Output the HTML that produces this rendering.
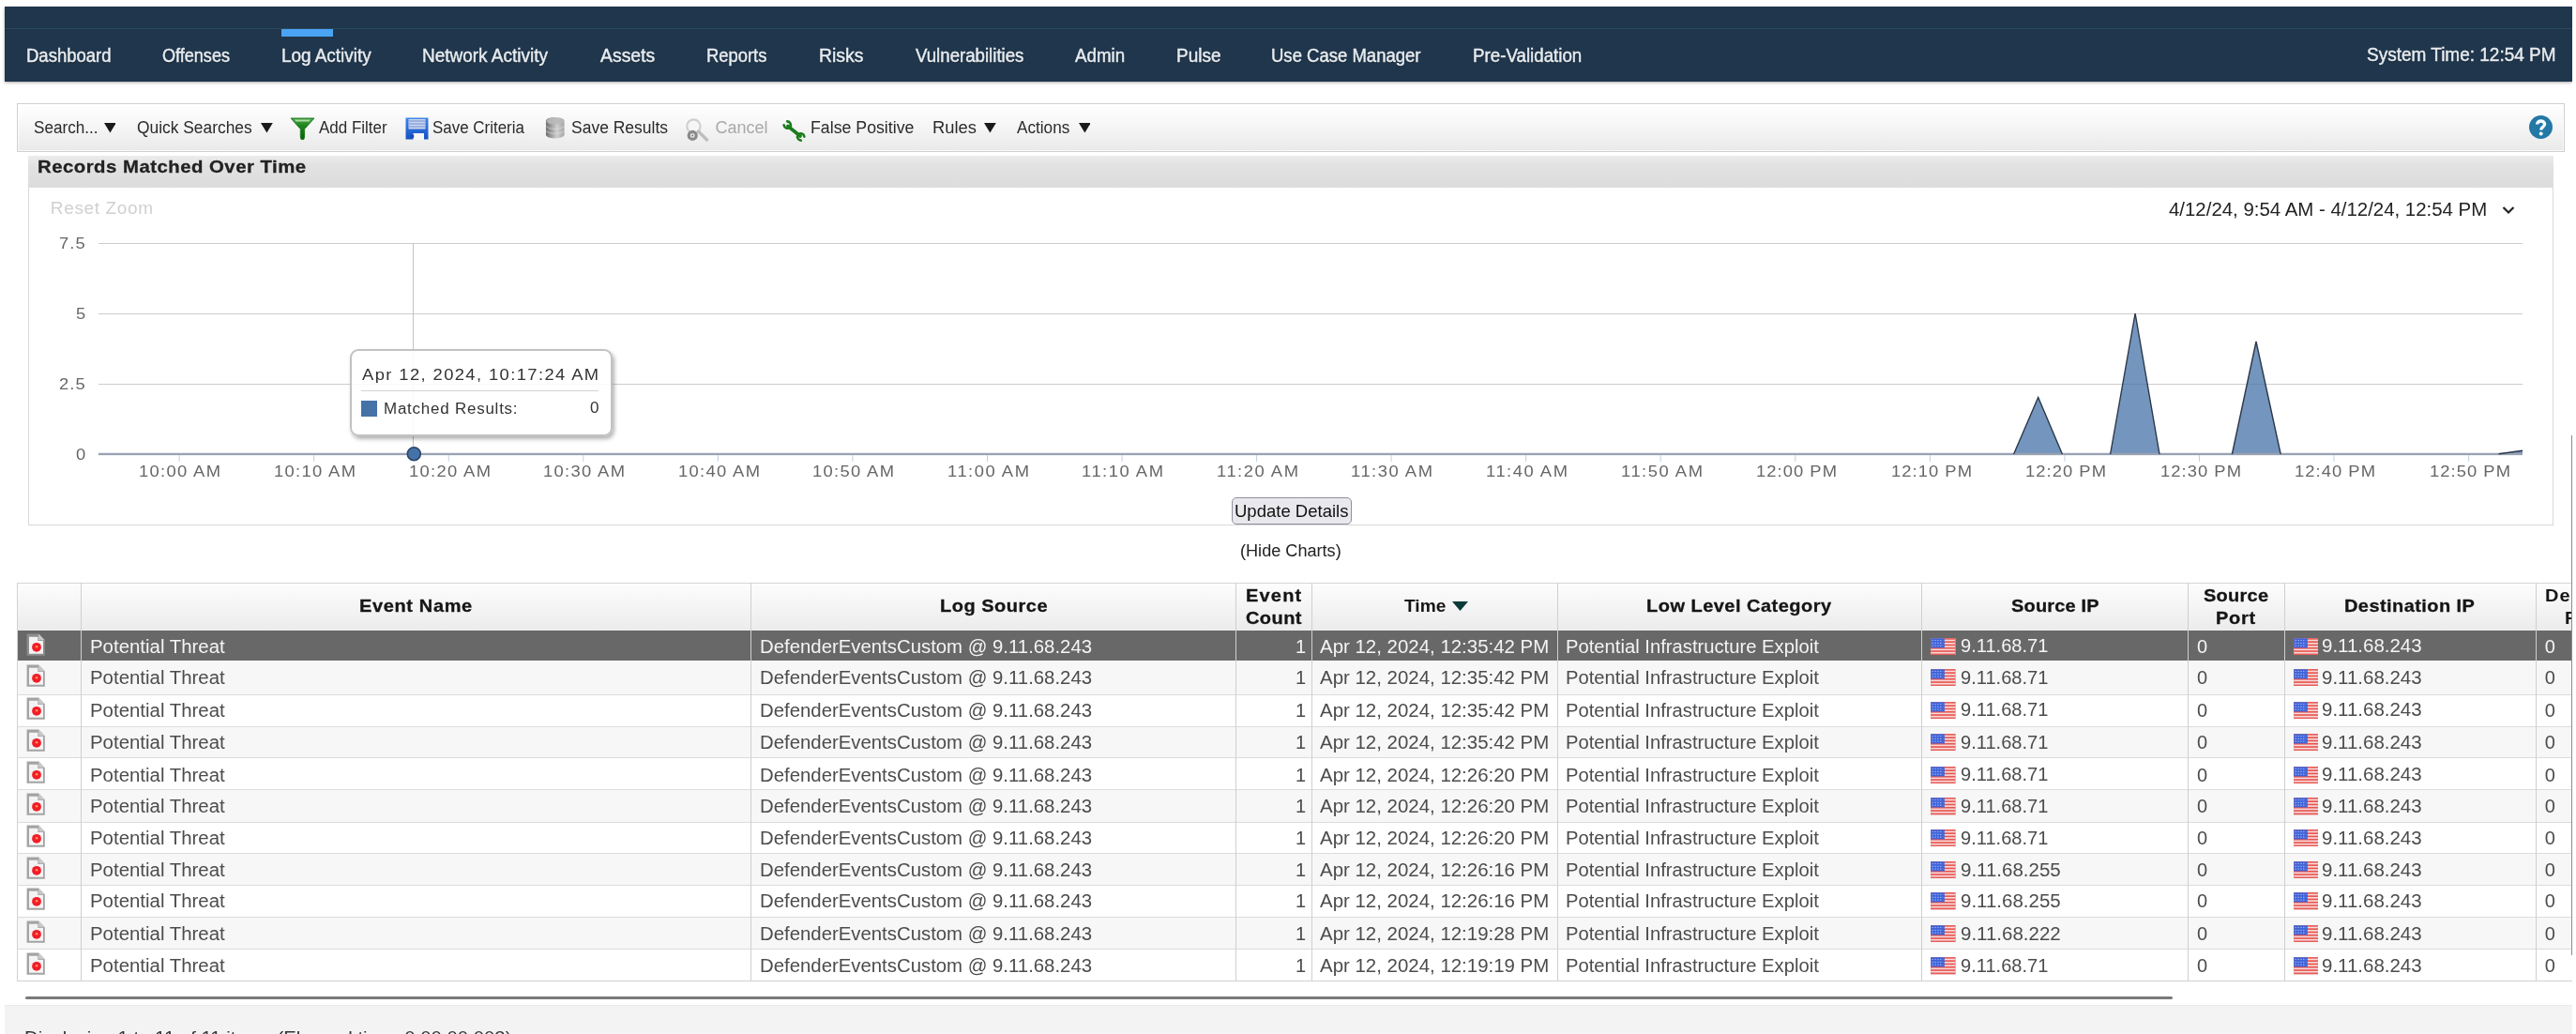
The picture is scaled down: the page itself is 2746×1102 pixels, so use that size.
<!DOCTYPE html><html><head><meta charset="utf-8"><title>Log Activity</title><style>
html,body{margin:0;padding:0;background:#fff;}
body{width:2746px;height:1102px;overflow:hidden;position:relative;font-family:"Liberation Sans",sans-serif;}
.a{position:absolute;}
.t{position:absolute;white-space:pre;display:inline-block;}
#clip{position:absolute;left:0;top:0;width:2742px;height:1102px;overflow:hidden;filter:blur(.45px);}
</style></head><body><div id="clip">
<div class="a" style="left:5px;top:7.3px;width:2737px;height:80px;background:#1f364c;box-shadow:0 1px 3px rgba(0,0,0,.35)"></div>
<div class="a" style="left:5px;top:30px;width:2737px;height:1px;background:#2b4a5e"></div>
<div class="a" style="left:300px;top:31px;width:55px;height:8px;background:#4ba3f4"></div>
<span class="t" style="left:27.58px;top:47.37px;font-size:20px;line-height:24.00px;color:#e9edf0;transform:scaleX(0.9246);transform-origin:0 50%;text-shadow:0 1px 1px rgba(0,0,0,.5);-webkit-text-stroke:.45px #e4e9ee">Dashboard</span>
<span class="t" style="left:173.20px;top:47.37px;font-size:20px;line-height:24.00px;color:#e9edf0;transform:scaleX(0.9036);transform-origin:0 50%;text-shadow:0 1px 1px rgba(0,0,0,.5);-webkit-text-stroke:.45px #e4e9ee">Offenses</span>
<span class="t" style="left:299.75px;top:47.37px;font-size:20px;line-height:24.00px;color:#e9edf0;transform:scaleX(0.9450);transform-origin:0 50%;text-shadow:0 1px 1px rgba(0,0,0,.5);-webkit-text-stroke:.45px #e4e9ee">Log Activity</span>
<span class="t" style="left:449.75px;top:47.37px;font-size:20px;line-height:24.00px;color:#e9edf0;transform:scaleX(0.9487);transform-origin:0 50%;text-shadow:0 1px 1px rgba(0,0,0,.5);-webkit-text-stroke:.45px #e4e9ee">Network Activity</span>
<span class="t" style="left:640.00px;top:47.37px;font-size:20px;line-height:24.00px;color:#e9edf0;transform:scaleX(0.9697);transform-origin:0 50%;text-shadow:0 1px 1px rgba(0,0,0,.5);-webkit-text-stroke:.45px #e4e9ee">Assets</span>
<span class="t" style="left:752.68px;top:47.37px;font-size:20px;line-height:24.00px;color:#e9edf0;transform:scaleX(0.9199);transform-origin:0 50%;text-shadow:0 1px 1px rgba(0,0,0,.5);-webkit-text-stroke:.45px #e4e9ee">Reports</span>
<span class="t" style="left:872.93px;top:47.37px;font-size:20px;line-height:24.00px;color:#e9edf0;transform:scaleX(0.9710);transform-origin:0 50%;text-shadow:0 1px 1px rgba(0,0,0,.5);-webkit-text-stroke:.45px #e4e9ee">Risks</span>
<span class="t" style="left:975.70px;top:47.37px;font-size:20px;line-height:24.00px;color:#e9edf0;transform:scaleX(0.9324);transform-origin:0 50%;text-shadow:0 1px 1px rgba(0,0,0,.5);-webkit-text-stroke:.45px #e4e9ee">Vulnerabilities</span>
<span class="t" style="left:1146.10px;top:47.37px;font-size:20px;line-height:24.00px;color:#e9edf0;transform:scaleX(0.9376);transform-origin:0 50%;text-shadow:0 1px 1px rgba(0,0,0,.5);-webkit-text-stroke:.45px #e4e9ee">Admin</span>
<span class="t" style="left:1254.05px;top:47.37px;font-size:20px;line-height:24.00px;color:#e9edf0;transform:scaleX(0.9488);transform-origin:0 50%;text-shadow:0 1px 1px rgba(0,0,0,.5);-webkit-text-stroke:.45px #e4e9ee">Pulse</span>
<span class="t" style="left:1355.17px;top:47.37px;font-size:20px;line-height:24.00px;color:#e9edf0;transform:scaleX(0.9258);transform-origin:0 50%;text-shadow:0 1px 1px rgba(0,0,0,.5);-webkit-text-stroke:.45px #e4e9ee">Use Case Manager</span>
<span class="t" style="left:1570.16px;top:47.37px;font-size:20px;line-height:24.00px;color:#e9edf0;transform:scaleX(0.9368);transform-origin:0 50%;text-shadow:0 1px 1px rgba(0,0,0,.5);-webkit-text-stroke:.45px #e4e9ee">Pre-Validation</span>
<span class="t" style="left:2522.70px;top:46.47px;font-size:20px;line-height:24.00px;color:#e9edf0;transform:scaleX(0.9495);transform-origin:0 50%;text-shadow:0 1px 1px rgba(0,0,0,.5);-webkit-text-stroke:.45px #e4e9ee">System Time: 12:54 PM</span>
<div class="a" style="left:18px;top:110px;width:2714px;height:50px;box-shadow:inset 0 0 0 1px rgba(255,255,255,.7);border:1px solid #d0d0d0;background:linear-gradient(#ffffff,#f5f5f5 50%,#e9e9e9)"></div>
<span class="t" style="left:35.60px;top:125.96px;font-size:18px;line-height:21.60px;color:#2b2b2b;transform:scaleX(0.9517);transform-origin:0 50%">Search...</span>
<svg class="a" style="left:110.6px;top:131.4px" width="12.8" height="10.5" viewBox="0 0 12.8 10.5"><path d="M0 0H12.8L6.4 10.5Z" fill="#1a1a1a"/></svg>
<span class="t" style="left:146.30px;top:125.96px;font-size:18px;line-height:21.60px;color:#2b2b2b;transform:scaleX(0.9657);transform-origin:0 50%">Quick Searches</span>
<svg class="a" style="left:278.4px;top:131.4px" width="12.8" height="10.5" viewBox="0 0 12.8 10.5"><path d="M0 0H12.8L6.4 10.5Z" fill="#1a1a1a"/></svg>
<span class="t" style="left:340.30px;top:125.96px;font-size:18px;line-height:21.60px;color:#2b2b2b;transform:scaleX(0.9437);transform-origin:0 50%">Add Filter</span>
<span class="t" style="left:461.40px;top:125.96px;font-size:18px;line-height:21.60px;color:#2b2b2b;transform:scaleX(0.9407);transform-origin:0 50%">Save Criteria</span>
<span class="t" style="left:609.00px;top:125.96px;font-size:18px;line-height:21.60px;color:#2b2b2b;transform:scaleX(0.9713);transform-origin:0 50%">Save Results</span>
<span class="t" style="left:762.50px;top:125.96px;font-size:18px;line-height:21.60px;color:#a9a9a9">Cancel</span>
<span class="t" style="left:864.01px;top:125.96px;font-size:18px;line-height:21.60px;color:#2b2b2b;transform:scaleX(0.9853);transform-origin:0 50%">False Positive</span>
<span class="t" style="left:994.48px;top:125.96px;font-size:18px;line-height:21.60px;color:#2b2b2b;transform:scaleX(1.0218);transform-origin:0 50%">Rules</span>
<svg class="a" style="left:1049px;top:131.4px" width="12.8" height="10.5" viewBox="0 0 12.8 10.5"><path d="M0 0H12.8L6.4 10.5Z" fill="#1a1a1a"/></svg>
<span class="t" style="left:1083.70px;top:125.96px;font-size:18px;line-height:21.60px;color:#2b2b2b;transform:scaleX(0.9538);transform-origin:0 50%">Actions</span>
<svg class="a" style="left:1149.5px;top:131.4px" width="12.8" height="10.5" viewBox="0 0 12.8 10.5"><path d="M0 0H12.8L6.4 10.5Z" fill="#1a1a1a"/></svg>
<svg class="a" style="left:309px;top:124px" width="27" height="27" viewBox="0 0 27 27">
<defs><linearGradient id="gf" x1="0" y1="0" x2="0" y2="1"><stop offset="0" stop-color="#4aa54a"/><stop offset=".35" stop-color="#1f861f"/><stop offset="1" stop-color="#0a5e0a"/></linearGradient></defs>
<path d="M1 2H26L15.6 13.6V22L14.8 24.6H12L11.3 22V13.6Z" fill="url(#gf)" stroke="#1a771a" stroke-width=".9"/>
<path d="M5 3.6H22L20.6 5.6H6.4Z" fill="#a9dca3"/></svg>
<svg class="a" style="left:432px;top:125px" width="25" height="24" viewBox="0 0 25 24">
<defs><linearGradient id="gs" x1="0" y1="0" x2="0" y2="1"><stop offset="0" stop-color="#3f86e8"/><stop offset="1" stop-color="#1450c4"/></linearGradient></defs>
<path d="M.5 .5H24.5V23.5H.5Z" fill="url(#gs)"/>
<rect x="3.5" y="2" width="18" height="10.5" fill="#cdd6ee"/>
<path d="M3.5 4H21.5M3.5 7H21.5M3.5 10H21.5" stroke="#8aa2dc" stroke-width="1.4"/>
<rect x="8.5" y="17" width="11.5" height="7" fill="#f6f6f6"/><rect x="5.8" y="18.6" width="3.4" height="3.2" fill="#1a49ae"/></svg>
<svg class="a" style="left:581px;top:124px" width="21.5" height="24.5" viewBox="0 0 22 25">
<defs><linearGradient id="gd" x1="0" y1="0" x2="1" y2="0"><stop offset="0" stop-color="#6f6f6f"/><stop offset=".6" stop-color="#cfcfcf"/><stop offset="1" stop-color="#a4a4a4"/></linearGradient></defs>
<path d="M1 5C1 -0.3 21 -0.3 21 5V20C21 25.3 1 25.3 1 20Z" fill="url(#gd)"/>
<ellipse cx="11" cy="5" rx="9.6" ry="3.6" fill="#b9b9b9" opacity=".9"/>
<path d="M1.5 10.5C1.5 14.6 20.5 14.6 20.5 10.5M1.5 15.6C1.5 19.7 20.5 19.7 20.5 15.6" fill="none" stroke="#e6e6e6" stroke-width="1" opacity=".6"/></svg>
<svg class="a" style="left:727.5px;top:124.5px" width="28" height="27" viewBox="0 0 28 27">
<circle cx="11.4" cy="9.6" r="7.2" fill="#f6f6f6" stroke="#d0d0d0" stroke-width="2.2"/>
<path d="M16.5 15L25.5 24" stroke="#bdbdbd" stroke-width="3.4" stroke-linecap="round"/>
<circle cx="10.2" cy="19.4" r="4" fill="none" stroke="#8a8a8a" stroke-width="3.2"/><circle cx="10.2" cy="19.4" r="1" fill="#777"/></svg>
<svg class="a" style="left:833.5px;top:127.5px" width="25" height="23" viewBox="0 0 25 23">
<g fill="none" stroke="#1c7c1c" stroke-linecap="round">
<path d="M6 6.5L19 17" stroke-width="3.6"/>
<path d="M1.6 5.2C2.2 8.6 5.6 9.6 8 8M5.2 1.4C8.4 1.6 9.8 4.8 8.4 7.4" stroke-width="2.6"/>
<path d="M23.4 17.6C22.8 14.4 19.6 13.4 17.2 15M19.8 21.6C16.6 21.4 15.2 18.2 16.6 15.6" stroke-width="2.6"/>
</g></svg>
<svg class="a" style="left:2694.5px;top:121.7px" width="27" height="27" viewBox="0 0 27 27">
<circle cx="13.5" cy="13.5" r="12.5" fill="#2378a6"/>
<path d="M9.6 10.4C9.6 5.8 17.6 6 17.6 10.2C17.6 13 13.7 13.4 13.7 16.4" fill="none" stroke="#f4fbff" stroke-width="3.4"/>
<circle cx="13.7" cy="20.4" r="2" fill="#f4fbff"/></svg>
<div class="a" style="left:30px;top:166px;width:2690px;height:392px;border:1px solid #d9d9d9;background:#fff"></div>
<div class="a" style="left:30px;top:166px;width:2692px;height:34px;background:linear-gradient(#ececec,#e2e2e2 30%,#dcdcdc)"></div>
<span class="t" style="left:39.53px;top:167.22px;font-size:19px;line-height:22.80px;color:#222;font-weight:bold;letter-spacing:0.463px;transform:scaleX(1.0700);transform-origin:0 50%;-webkit-text-stroke:.3px #222">Records Matched Over Time</span>
<span class="t" style="left:53.80px;top:211.22px;font-size:19px;line-height:22.80px;color:#d0d0d0;letter-spacing:0.650px">Reset Zoom</span>
<span class="t" style="left:2312.00px;top:211.94px;font-size:19.5px;line-height:23.40px;color:#222;transform:scaleX(1.0464);transform-origin:0 50%">4/12/24, 9:54 AM - 4/12/24, 12:54 PM</span>
<svg class="a" style="left:2667px;top:219px" width="14" height="10" viewBox="0 0 14 10"><path d="M1.5 2L7 7.5L12.5 2" fill="none" stroke="#222" stroke-width="2.2"/></svg>
<svg class="a" style="left:0;top:0" width="2742" height="620" viewBox="0 0 2742 620">
<path d="M105.0 259.5H2689.0" stroke="#cdcdcd" stroke-width="1"/>
<path d="M105.0 334.5H2689.0" stroke="#cdcdcd" stroke-width="1"/>
<path d="M105.0 409.5H2689.0" stroke="#cdcdcd" stroke-width="1"/>
<path d="M440.5 259V484" stroke="#c2c2c2" stroke-width="1"/>
<path d="M105.0 484.5H2689.0" stroke="#c0d0e0" stroke-width="1.5"/>
<path d="M191.1 485V492M334.7 485V492M478.2 485V492M621.8 485V492M765.4 485V492M908.9 485V492M1052.5 485V492M1196.0 485V492M1339.6 485V492M1483.1 485V492M1626.7 485V492M1770.2 485V492M1913.8 485V492M2057.4 485V492M2200.9 485V492M2344.5 485V492M2488.0 485V492M2631.6 485V492" stroke="#c0d0e0" stroke-width="1"/>
<path d="M105.0 484.0 L2146.6 484.0 L2172.7 423.5 L2198.4 484.0 L2249.6 484.0 L2276.1 334.0 L2302.0 484.0 L2379.4 484.0 L2405.0 364.0 L2431.2 484.0 L2663.6 484.0 L2689.0 480.3 L2689.0 484.5 L105.0 484.5Z" fill="#4572a7" fill-opacity=".75"/>
<path d="M105.0 483.9H2689.0" stroke="#9aa2b2" stroke-width="2.4"/>
<path d="M2146.6 484.0L2172.7 423.5L2198.4 484.0" fill="none" stroke="#2b3849" stroke-width="1.4" stroke-linejoin="miter"/>
<path d="M2249.6 484.0L2276.1 334.0L2302.0 484.0" fill="none" stroke="#2b3849" stroke-width="1.4" stroke-linejoin="miter"/>
<path d="M2379.4 484.0L2405.0 364.0L2431.2 484.0" fill="none" stroke="#2b3849" stroke-width="1.4" stroke-linejoin="miter"/>
<path d="M2663.6 483.8L2689.0 480.3" fill="none" stroke="#2b3849" stroke-width="1.6"/>
<circle cx="441.3" cy="483.7" r="7" fill="#4572a7" stroke="#2a4468" stroke-width="1.6"/>
</svg><span class="t" style="left:62.90px;top:250.41px;font-size:17px;line-height:20.40px;color:#666;letter-spacing:1.050px;transform:scaleX(1.0800);transform-origin:0 50%">7.5</span><span class="t" style="left:81.40px;top:325.41px;font-size:17px;line-height:20.40px;color:#666;letter-spacing:-0.852px;transform:scaleX(1.0800);transform-origin:0 50%">5</span><span class="t" style="left:62.90px;top:400.41px;font-size:17px;line-height:20.40px;color:#666;letter-spacing:1.050px;transform:scaleX(1.0800);transform-origin:0 50%">2.5</span><span class="t" style="left:80.60px;top:475.41px;font-size:17px;line-height:20.40px;color:#666;letter-spacing:-0.111px;transform:scaleX(1.0800);transform-origin:0 50%">0</span><span class="t" style="left:148.45px;top:492.91px;font-size:17px;line-height:20.40px;color:#666;letter-spacing:1.237px;transform:scaleX(1.0800);transform-origin:0 50%">10:00 AM</span><span class="t" style="left:292.01px;top:492.91px;font-size:17px;line-height:20.40px;color:#666;letter-spacing:1.237px;transform:scaleX(1.0800);transform-origin:0 50%">10:10 AM</span><span class="t" style="left:435.56px;top:492.91px;font-size:17px;line-height:20.40px;color:#666;letter-spacing:1.237px;transform:scaleX(1.0800);transform-origin:0 50%">10:20 AM</span><span class="t" style="left:579.12px;top:492.91px;font-size:17px;line-height:20.40px;color:#666;letter-spacing:1.237px;transform:scaleX(1.0800);transform-origin:0 50%">10:30 AM</span><span class="t" style="left:722.68px;top:492.91px;font-size:17px;line-height:20.40px;color:#666;letter-spacing:1.237px;transform:scaleX(1.0800);transform-origin:0 50%">10:40 AM</span><span class="t" style="left:866.23px;top:492.91px;font-size:17px;line-height:20.40px;color:#666;letter-spacing:1.237px;transform:scaleX(1.0800);transform-origin:0 50%">10:50 AM</span><span class="t" style="left:1009.79px;top:492.91px;font-size:17px;line-height:20.40px;color:#666;letter-spacing:1.417px;transform:scaleX(1.0800);transform-origin:0 50%">11:00 AM</span><span class="t" style="left:1153.34px;top:492.91px;font-size:17px;line-height:20.40px;color:#666;letter-spacing:1.417px;transform:scaleX(1.0800);transform-origin:0 50%">11:10 AM</span><span class="t" style="left:1296.90px;top:492.91px;font-size:17px;line-height:20.40px;color:#666;letter-spacing:1.417px;transform:scaleX(1.0800);transform-origin:0 50%">11:20 AM</span><span class="t" style="left:1440.45px;top:492.91px;font-size:17px;line-height:20.40px;color:#666;letter-spacing:1.417px;transform:scaleX(1.0800);transform-origin:0 50%">11:30 AM</span><span class="t" style="left:1584.01px;top:492.91px;font-size:17px;line-height:20.40px;color:#666;letter-spacing:1.417px;transform:scaleX(1.0800);transform-origin:0 50%">11:40 AM</span><span class="t" style="left:1727.56px;top:492.91px;font-size:17px;line-height:20.40px;color:#666;letter-spacing:1.417px;transform:scaleX(1.0800);transform-origin:0 50%">11:50 AM</span><span class="t" style="left:1872.12px;top:492.91px;font-size:17px;line-height:20.40px;color:#666;letter-spacing:0.972px;transform:scaleX(1.0800);transform-origin:0 50%">12:00 PM</span><span class="t" style="left:2015.68px;top:492.91px;font-size:17px;line-height:20.40px;color:#666;letter-spacing:0.972px;transform:scaleX(1.0800);transform-origin:0 50%">12:10 PM</span><span class="t" style="left:2159.23px;top:492.91px;font-size:17px;line-height:20.40px;color:#666;letter-spacing:0.972px;transform:scaleX(1.0800);transform-origin:0 50%">12:20 PM</span><span class="t" style="left:2302.79px;top:492.91px;font-size:17px;line-height:20.40px;color:#666;letter-spacing:0.972px;transform:scaleX(1.0800);transform-origin:0 50%">12:30 PM</span><span class="t" style="left:2446.34px;top:492.91px;font-size:17px;line-height:20.40px;color:#666;letter-spacing:0.972px;transform:scaleX(1.0800);transform-origin:0 50%">12:40 PM</span><span class="t" style="left:2589.90px;top:492.91px;font-size:17px;line-height:20.40px;color:#666;letter-spacing:0.972px;transform:scaleX(1.0800);transform-origin:0 50%">12:50 PM</span><div class="a" style="left:373px;top:372px;width:276px;height:88.5px;border:2px solid #c2c2c2;border-radius:9px;background:rgba(255,255,255,.88);box-shadow:2px 3px 4px rgba(0,0,0,.3)"></div><span class="t" style="left:386.10px;top:390.01px;font-size:17px;line-height:20.40px;color:#333;letter-spacing:1.300px;transform:scaleX(1.0800);transform-origin:0 50%">Apr 12, 2024, 10:17:24 AM</span><div class="a" style="left:385px;top:416px;width:253px;height:1px;background:#d4d4d4"></div><div class="a" style="left:385px;top:426.5px;width:17px;height:17px;background:#4572a7"></div><span class="t" style="left:409.14px;top:426.26px;font-size:16px;line-height:19.20px;color:#333;letter-spacing:0.727px;transform:scaleX(1.0600);transform-origin:0 50%">Matched Results:</span><span class="t" style="left:628.50px;top:424.78px;font-size:16.5px;line-height:19.80px;color:#333;transform:scaleX(1.0333);transform-origin:0 50%">0</span>
<div class="a" style="left:1313px;top:529.5px;width:126px;height:27px;border:1px solid #8f8f9d;border-radius:5px;background:#e9e9ed"></div>
<span class="t" style="left:1315.53px;top:533.52px;font-size:19px;line-height:22.80px;color:#111;transform:scaleX(0.9746);transform-origin:0 50%">Update Details</span>
<span class="t" style="left:1322.34px;top:576.56px;font-size:18px;line-height:21.60px;color:#222;transform:scaleX(1.0064);transform-origin:0 50%">(Hide Charts)</span>
<div class="a" style="left:18.5px;top:620.5px;width:2740px;height:51.0px;background:linear-gradient(#fdfdfd,#f4f4f4 50%,#ebebeb);border-top:1px solid #d6d6d6"></div>
<div class="a" style="left:18.5px;top:671.60px;width:2740px;height:32.90px;background:#686868;box-shadow:inset 0 -1px 0 #686868"></div>
<svg class="a" style="left:28.2px;top:674.5px" width="20.4" height="24.4" viewBox="0 0 20.4 24.4">
<path d="M.6 .6H13.2L19.8 7.2V23.8H.6Z" fill="#8d8d8d"/>
<path d="M13.2 .6L19.8 7.2H13.2Z" fill="#c9c9c9"/>
<path d="M3 3.8H12.4V8H18V21.8H3Z" fill="#f3f3f3"/>
<circle cx="11" cy="14.8" r="4.9" fill="#f21d28"/><circle cx="11.1" cy="14.2" r="1.3" fill="#ff9060"/></svg>
<span class="t" style="left:95.58px;top:676.77px;font-size:20px;line-height:24.00px;color:#f4f4f4;transform:scaleX(1.0204);transform-origin:0 50%">Potential Threat</span>
<span class="t" style="left:810.08px;top:676.77px;font-size:20px;line-height:24.00px;color:#f4f4f4;transform:scaleX(1.0176);transform-origin:0 50%">DefenderEventsCustom @ 9.11.68.243</span>
<span class="t" style="left:1381.00px;top:676.77px;font-size:20px;line-height:24.00px;color:#f4f4f4">1</span>
<span class="t" style="left:1406.90px;top:676.77px;font-size:20px;line-height:24.00px;color:#f4f4f4;transform:scaleX(1.0218);transform-origin:0 50%">Apr 12, 2024, 12:35:42 PM</span>
<span class="t" style="left:1668.99px;top:676.77px;font-size:20px;line-height:24.00px;color:#f4f4f4;transform:scaleX(1.0111);transform-origin:0 50%">Potential Infrastructure Exploit</span>
<svg class="a" style="left:2058.4px;top:679.7px" width="26.4" height="18.2" viewBox="0 0 16 11"><rect width="16" height="11" fill="#f6dcdc"/><rect y="0" width="16" height="1" fill="#e8544f"/><rect y="2" width="16" height="1" fill="#e8544f"/><rect y="4" width="16" height="1" fill="#e8544f"/><rect y="6" width="16" height="1" fill="#e8544f"/><rect y="8" width="16" height="1" fill="#e8544f"/><rect y="10" width="16" height="1" fill="#e8544f"/><rect width="9" height="6.3" fill="#3f63d8"/><path d="M1 1.5H8M1 3.2H8M1 4.9H8" stroke="#9db4f5" stroke-width=".7" stroke-dasharray=".8 .9"/><rect width="16" height="11" fill="none" stroke="#d88" stroke-width=".5" opacity=".6"/></svg>
<span class="t" style="left:2090.00px;top:676.27px;font-size:20px;line-height:24.00px;color:#f4f4f4;transform:scaleX(1.0030);transform-origin:0 50%">9.11.68.71</span>
<span class="t" style="left:2342.00px;top:676.77px;font-size:20px;line-height:24.00px;color:#f4f4f4">0</span>
<svg class="a" style="left:2445px;top:679.7px" width="26.4" height="18.2" viewBox="0 0 16 11"><rect width="16" height="11" fill="#f6dcdc"/><rect y="0" width="16" height="1" fill="#e8544f"/><rect y="2" width="16" height="1" fill="#e8544f"/><rect y="4" width="16" height="1" fill="#e8544f"/><rect y="6" width="16" height="1" fill="#e8544f"/><rect y="8" width="16" height="1" fill="#e8544f"/><rect y="10" width="16" height="1" fill="#e8544f"/><rect width="9" height="6.3" fill="#3f63d8"/><path d="M1 1.5H8M1 3.2H8M1 4.9H8" stroke="#9db4f5" stroke-width=".7" stroke-dasharray=".8 .9"/><rect width="16" height="11" fill="none" stroke="#d88" stroke-width=".5" opacity=".6"/></svg>
<span class="t" style="left:2475.10px;top:676.27px;font-size:20px;line-height:24.00px;color:#f4f4f4;transform:scaleX(1.0236);transform-origin:0 50%">9.11.68.243</span>
<span class="t" style="left:2712.80px;top:676.77px;font-size:20px;line-height:24.00px;color:#f4f4f4">0</span>
<div class="a" style="left:18.5px;top:704.50px;width:2740px;height:36.00px;background:#f7f7f7;box-shadow:inset 0 -1px 0 #dcdcdc"></div>
<svg class="a" style="left:28.2px;top:707.8px" width="20.4" height="24.4" viewBox="0 0 20.4 24.4">
<path d="M.6 .6H13.2L19.8 7.2V23.8H.6Z" fill="#a3a3a3"/>
<path d="M13.2 .6L19.8 7.2H13.2Z" fill="#c9c9c9"/>
<path d="M3 3.8H12.4V8H18V21.8H3Z" fill="#f3f3f3"/>
<circle cx="11" cy="14.8" r="4.9" fill="#f21d28"/><circle cx="11.1" cy="14.2" r="1.3" fill="#ff9060"/></svg>
<span class="t" style="left:95.58px;top:710.07px;font-size:20px;line-height:24.00px;color:#4c4c4c;transform:scaleX(1.0204);transform-origin:0 50%">Potential Threat</span>
<span class="t" style="left:810.08px;top:710.07px;font-size:20px;line-height:24.00px;color:#4c4c4c;transform:scaleX(1.0176);transform-origin:0 50%">DefenderEventsCustom @ 9.11.68.243</span>
<span class="t" style="left:1381.00px;top:710.07px;font-size:20px;line-height:24.00px;color:#4c4c4c">1</span>
<span class="t" style="left:1406.90px;top:710.07px;font-size:20px;line-height:24.00px;color:#4c4c4c;transform:scaleX(1.0218);transform-origin:0 50%">Apr 12, 2024, 12:35:42 PM</span>
<span class="t" style="left:1668.99px;top:710.07px;font-size:20px;line-height:24.00px;color:#4c4c4c;transform:scaleX(1.0111);transform-origin:0 50%">Potential Infrastructure Exploit</span>
<svg class="a" style="left:2058.4px;top:713.0px" width="26.4" height="18.2" viewBox="0 0 16 11"><rect width="16" height="11" fill="#f6dcdc"/><rect y="0" width="16" height="1" fill="#e8544f"/><rect y="2" width="16" height="1" fill="#e8544f"/><rect y="4" width="16" height="1" fill="#e8544f"/><rect y="6" width="16" height="1" fill="#e8544f"/><rect y="8" width="16" height="1" fill="#e8544f"/><rect y="10" width="16" height="1" fill="#e8544f"/><rect width="9" height="6.3" fill="#3f63d8"/><path d="M1 1.5H8M1 3.2H8M1 4.9H8" stroke="#9db4f5" stroke-width=".7" stroke-dasharray=".8 .9"/><rect width="16" height="11" fill="none" stroke="#d88" stroke-width=".5" opacity=".6"/></svg>
<span class="t" style="left:2090.00px;top:709.57px;font-size:20px;line-height:24.00px;color:#4c4c4c;transform:scaleX(1.0030);transform-origin:0 50%">9.11.68.71</span>
<span class="t" style="left:2342.00px;top:710.07px;font-size:20px;line-height:24.00px;color:#4c4c4c">0</span>
<svg class="a" style="left:2445px;top:713.0px" width="26.4" height="18.2" viewBox="0 0 16 11"><rect width="16" height="11" fill="#f6dcdc"/><rect y="0" width="16" height="1" fill="#e8544f"/><rect y="2" width="16" height="1" fill="#e8544f"/><rect y="4" width="16" height="1" fill="#e8544f"/><rect y="6" width="16" height="1" fill="#e8544f"/><rect y="8" width="16" height="1" fill="#e8544f"/><rect y="10" width="16" height="1" fill="#e8544f"/><rect width="9" height="6.3" fill="#3f63d8"/><path d="M1 1.5H8M1 3.2H8M1 4.9H8" stroke="#9db4f5" stroke-width=".7" stroke-dasharray=".8 .9"/><rect width="16" height="11" fill="none" stroke="#d88" stroke-width=".5" opacity=".6"/></svg>
<span class="t" style="left:2475.10px;top:709.57px;font-size:20px;line-height:24.00px;color:#4c4c4c;transform:scaleX(1.0236);transform-origin:0 50%">9.11.68.243</span>
<span class="t" style="left:2712.80px;top:710.07px;font-size:20px;line-height:24.00px;color:#4c4c4c">0</span>
<div class="a" style="left:18.5px;top:740.50px;width:2740px;height:34.50px;background:#ffffff;box-shadow:inset 0 -1px 0 #dcdcdc"></div>
<svg class="a" style="left:28.2px;top:742.5px" width="20.4" height="24.4" viewBox="0 0 20.4 24.4">
<path d="M.6 .6H13.2L19.8 7.2V23.8H.6Z" fill="#a3a3a3"/>
<path d="M13.2 .6L19.8 7.2H13.2Z" fill="#c9c9c9"/>
<path d="M3 3.8H12.4V8H18V21.8H3Z" fill="#f3f3f3"/>
<circle cx="11" cy="14.8" r="4.9" fill="#f21d28"/><circle cx="11.1" cy="14.2" r="1.3" fill="#ff9060"/></svg>
<span class="t" style="left:95.58px;top:744.77px;font-size:20px;line-height:24.00px;color:#4c4c4c;transform:scaleX(1.0204);transform-origin:0 50%">Potential Threat</span>
<span class="t" style="left:810.08px;top:744.77px;font-size:20px;line-height:24.00px;color:#4c4c4c;transform:scaleX(1.0176);transform-origin:0 50%">DefenderEventsCustom @ 9.11.68.243</span>
<span class="t" style="left:1381.00px;top:744.77px;font-size:20px;line-height:24.00px;color:#4c4c4c">1</span>
<span class="t" style="left:1406.90px;top:744.77px;font-size:20px;line-height:24.00px;color:#4c4c4c;transform:scaleX(1.0218);transform-origin:0 50%">Apr 12, 2024, 12:35:42 PM</span>
<span class="t" style="left:1668.99px;top:744.77px;font-size:20px;line-height:24.00px;color:#4c4c4c;transform:scaleX(1.0111);transform-origin:0 50%">Potential Infrastructure Exploit</span>
<svg class="a" style="left:2058.4px;top:747.7px" width="26.4" height="18.2" viewBox="0 0 16 11"><rect width="16" height="11" fill="#f6dcdc"/><rect y="0" width="16" height="1" fill="#e8544f"/><rect y="2" width="16" height="1" fill="#e8544f"/><rect y="4" width="16" height="1" fill="#e8544f"/><rect y="6" width="16" height="1" fill="#e8544f"/><rect y="8" width="16" height="1" fill="#e8544f"/><rect y="10" width="16" height="1" fill="#e8544f"/><rect width="9" height="6.3" fill="#3f63d8"/><path d="M1 1.5H8M1 3.2H8M1 4.9H8" stroke="#9db4f5" stroke-width=".7" stroke-dasharray=".8 .9"/><rect width="16" height="11" fill="none" stroke="#d88" stroke-width=".5" opacity=".6"/></svg>
<span class="t" style="left:2090.00px;top:744.27px;font-size:20px;line-height:24.00px;color:#4c4c4c;transform:scaleX(1.0030);transform-origin:0 50%">9.11.68.71</span>
<span class="t" style="left:2342.00px;top:744.77px;font-size:20px;line-height:24.00px;color:#4c4c4c">0</span>
<svg class="a" style="left:2445px;top:747.7px" width="26.4" height="18.2" viewBox="0 0 16 11"><rect width="16" height="11" fill="#f6dcdc"/><rect y="0" width="16" height="1" fill="#e8544f"/><rect y="2" width="16" height="1" fill="#e8544f"/><rect y="4" width="16" height="1" fill="#e8544f"/><rect y="6" width="16" height="1" fill="#e8544f"/><rect y="8" width="16" height="1" fill="#e8544f"/><rect y="10" width="16" height="1" fill="#e8544f"/><rect width="9" height="6.3" fill="#3f63d8"/><path d="M1 1.5H8M1 3.2H8M1 4.9H8" stroke="#9db4f5" stroke-width=".7" stroke-dasharray=".8 .9"/><rect width="16" height="11" fill="none" stroke="#d88" stroke-width=".5" opacity=".6"/></svg>
<span class="t" style="left:2475.10px;top:744.27px;font-size:20px;line-height:24.00px;color:#4c4c4c;transform:scaleX(1.0236);transform-origin:0 50%">9.11.68.243</span>
<span class="t" style="left:2712.80px;top:744.77px;font-size:20px;line-height:24.00px;color:#4c4c4c">0</span>
<div class="a" style="left:18.5px;top:775.00px;width:2740px;height:32.90px;background:#f7f7f7;box-shadow:inset 0 -1px 0 #dcdcdc"></div>
<svg class="a" style="left:28.2px;top:776.8px" width="20.4" height="24.4" viewBox="0 0 20.4 24.4">
<path d="M.6 .6H13.2L19.8 7.2V23.8H.6Z" fill="#a3a3a3"/>
<path d="M13.2 .6L19.8 7.2H13.2Z" fill="#c9c9c9"/>
<path d="M3 3.8H12.4V8H18V21.8H3Z" fill="#f3f3f3"/>
<circle cx="11" cy="14.8" r="4.9" fill="#f21d28"/><circle cx="11.1" cy="14.2" r="1.3" fill="#ff9060"/></svg>
<span class="t" style="left:95.58px;top:779.07px;font-size:20px;line-height:24.00px;color:#4c4c4c;transform:scaleX(1.0204);transform-origin:0 50%">Potential Threat</span>
<span class="t" style="left:810.08px;top:779.07px;font-size:20px;line-height:24.00px;color:#4c4c4c;transform:scaleX(1.0176);transform-origin:0 50%">DefenderEventsCustom @ 9.11.68.243</span>
<span class="t" style="left:1381.00px;top:779.07px;font-size:20px;line-height:24.00px;color:#4c4c4c">1</span>
<span class="t" style="left:1406.90px;top:779.07px;font-size:20px;line-height:24.00px;color:#4c4c4c;transform:scaleX(1.0218);transform-origin:0 50%">Apr 12, 2024, 12:35:42 PM</span>
<span class="t" style="left:1668.99px;top:779.07px;font-size:20px;line-height:24.00px;color:#4c4c4c;transform:scaleX(1.0111);transform-origin:0 50%">Potential Infrastructure Exploit</span>
<svg class="a" style="left:2058.4px;top:782.0px" width="26.4" height="18.2" viewBox="0 0 16 11"><rect width="16" height="11" fill="#f6dcdc"/><rect y="0" width="16" height="1" fill="#e8544f"/><rect y="2" width="16" height="1" fill="#e8544f"/><rect y="4" width="16" height="1" fill="#e8544f"/><rect y="6" width="16" height="1" fill="#e8544f"/><rect y="8" width="16" height="1" fill="#e8544f"/><rect y="10" width="16" height="1" fill="#e8544f"/><rect width="9" height="6.3" fill="#3f63d8"/><path d="M1 1.5H8M1 3.2H8M1 4.9H8" stroke="#9db4f5" stroke-width=".7" stroke-dasharray=".8 .9"/><rect width="16" height="11" fill="none" stroke="#d88" stroke-width=".5" opacity=".6"/></svg>
<span class="t" style="left:2090.00px;top:778.57px;font-size:20px;line-height:24.00px;color:#4c4c4c;transform:scaleX(1.0030);transform-origin:0 50%">9.11.68.71</span>
<span class="t" style="left:2342.00px;top:779.07px;font-size:20px;line-height:24.00px;color:#4c4c4c">0</span>
<svg class="a" style="left:2445px;top:782.0px" width="26.4" height="18.2" viewBox="0 0 16 11"><rect width="16" height="11" fill="#f6dcdc"/><rect y="0" width="16" height="1" fill="#e8544f"/><rect y="2" width="16" height="1" fill="#e8544f"/><rect y="4" width="16" height="1" fill="#e8544f"/><rect y="6" width="16" height="1" fill="#e8544f"/><rect y="8" width="16" height="1" fill="#e8544f"/><rect y="10" width="16" height="1" fill="#e8544f"/><rect width="9" height="6.3" fill="#3f63d8"/><path d="M1 1.5H8M1 3.2H8M1 4.9H8" stroke="#9db4f5" stroke-width=".7" stroke-dasharray=".8 .9"/><rect width="16" height="11" fill="none" stroke="#d88" stroke-width=".5" opacity=".6"/></svg>
<span class="t" style="left:2475.10px;top:778.57px;font-size:20px;line-height:24.00px;color:#4c4c4c;transform:scaleX(1.0236);transform-origin:0 50%">9.11.68.243</span>
<span class="t" style="left:2712.80px;top:779.07px;font-size:20px;line-height:24.00px;color:#4c4c4c">0</span>
<div class="a" style="left:18.5px;top:807.90px;width:2740px;height:33.90px;background:#ffffff;box-shadow:inset 0 -1px 0 #dcdcdc"></div>
<svg class="a" style="left:28.2px;top:811.3px" width="20.4" height="24.4" viewBox="0 0 20.4 24.4">
<path d="M.6 .6H13.2L19.8 7.2V23.8H.6Z" fill="#a3a3a3"/>
<path d="M13.2 .6L19.8 7.2H13.2Z" fill="#c9c9c9"/>
<path d="M3 3.8H12.4V8H18V21.8H3Z" fill="#f3f3f3"/>
<circle cx="11" cy="14.8" r="4.9" fill="#f21d28"/><circle cx="11.1" cy="14.2" r="1.3" fill="#ff9060"/></svg>
<span class="t" style="left:95.58px;top:813.57px;font-size:20px;line-height:24.00px;color:#4c4c4c;transform:scaleX(1.0204);transform-origin:0 50%">Potential Threat</span>
<span class="t" style="left:810.08px;top:813.57px;font-size:20px;line-height:24.00px;color:#4c4c4c;transform:scaleX(1.0176);transform-origin:0 50%">DefenderEventsCustom @ 9.11.68.243</span>
<span class="t" style="left:1381.00px;top:813.57px;font-size:20px;line-height:24.00px;color:#4c4c4c">1</span>
<span class="t" style="left:1406.90px;top:813.57px;font-size:20px;line-height:24.00px;color:#4c4c4c;transform:scaleX(1.0218);transform-origin:0 50%">Apr 12, 2024, 12:26:20 PM</span>
<span class="t" style="left:1668.99px;top:813.57px;font-size:20px;line-height:24.00px;color:#4c4c4c;transform:scaleX(1.0111);transform-origin:0 50%">Potential Infrastructure Exploit</span>
<svg class="a" style="left:2058.4px;top:816.5px" width="26.4" height="18.2" viewBox="0 0 16 11"><rect width="16" height="11" fill="#f6dcdc"/><rect y="0" width="16" height="1" fill="#e8544f"/><rect y="2" width="16" height="1" fill="#e8544f"/><rect y="4" width="16" height="1" fill="#e8544f"/><rect y="6" width="16" height="1" fill="#e8544f"/><rect y="8" width="16" height="1" fill="#e8544f"/><rect y="10" width="16" height="1" fill="#e8544f"/><rect width="9" height="6.3" fill="#3f63d8"/><path d="M1 1.5H8M1 3.2H8M1 4.9H8" stroke="#9db4f5" stroke-width=".7" stroke-dasharray=".8 .9"/><rect width="16" height="11" fill="none" stroke="#d88" stroke-width=".5" opacity=".6"/></svg>
<span class="t" style="left:2090.00px;top:813.07px;font-size:20px;line-height:24.00px;color:#4c4c4c;transform:scaleX(1.0030);transform-origin:0 50%">9.11.68.71</span>
<span class="t" style="left:2342.00px;top:813.57px;font-size:20px;line-height:24.00px;color:#4c4c4c">0</span>
<svg class="a" style="left:2445px;top:816.5px" width="26.4" height="18.2" viewBox="0 0 16 11"><rect width="16" height="11" fill="#f6dcdc"/><rect y="0" width="16" height="1" fill="#e8544f"/><rect y="2" width="16" height="1" fill="#e8544f"/><rect y="4" width="16" height="1" fill="#e8544f"/><rect y="6" width="16" height="1" fill="#e8544f"/><rect y="8" width="16" height="1" fill="#e8544f"/><rect y="10" width="16" height="1" fill="#e8544f"/><rect width="9" height="6.3" fill="#3f63d8"/><path d="M1 1.5H8M1 3.2H8M1 4.9H8" stroke="#9db4f5" stroke-width=".7" stroke-dasharray=".8 .9"/><rect width="16" height="11" fill="none" stroke="#d88" stroke-width=".5" opacity=".6"/></svg>
<span class="t" style="left:2475.10px;top:813.07px;font-size:20px;line-height:24.00px;color:#4c4c4c;transform:scaleX(1.0236);transform-origin:0 50%">9.11.68.243</span>
<span class="t" style="left:2712.80px;top:813.57px;font-size:20px;line-height:24.00px;color:#4c4c4c">0</span>
<div class="a" style="left:18.5px;top:841.80px;width:2740px;height:34.90px;background:#f7f7f7;box-shadow:inset 0 -1px 0 #dcdcdc"></div>
<svg class="a" style="left:28.2px;top:845.1999999999999px" width="20.4" height="24.4" viewBox="0 0 20.4 24.4">
<path d="M.6 .6H13.2L19.8 7.2V23.8H.6Z" fill="#a3a3a3"/>
<path d="M13.2 .6L19.8 7.2H13.2Z" fill="#c9c9c9"/>
<path d="M3 3.8H12.4V8H18V21.8H3Z" fill="#f3f3f3"/>
<circle cx="11" cy="14.8" r="4.9" fill="#f21d28"/><circle cx="11.1" cy="14.2" r="1.3" fill="#ff9060"/></svg>
<span class="t" style="left:95.58px;top:847.47px;font-size:20px;line-height:24.00px;color:#4c4c4c;transform:scaleX(1.0204);transform-origin:0 50%">Potential Threat</span>
<span class="t" style="left:810.08px;top:847.47px;font-size:20px;line-height:24.00px;color:#4c4c4c;transform:scaleX(1.0176);transform-origin:0 50%">DefenderEventsCustom @ 9.11.68.243</span>
<span class="t" style="left:1381.00px;top:847.47px;font-size:20px;line-height:24.00px;color:#4c4c4c">1</span>
<span class="t" style="left:1406.90px;top:847.47px;font-size:20px;line-height:24.00px;color:#4c4c4c;transform:scaleX(1.0218);transform-origin:0 50%">Apr 12, 2024, 12:26:20 PM</span>
<span class="t" style="left:1668.99px;top:847.47px;font-size:20px;line-height:24.00px;color:#4c4c4c;transform:scaleX(1.0111);transform-origin:0 50%">Potential Infrastructure Exploit</span>
<svg class="a" style="left:2058.4px;top:850.4px" width="26.4" height="18.2" viewBox="0 0 16 11"><rect width="16" height="11" fill="#f6dcdc"/><rect y="0" width="16" height="1" fill="#e8544f"/><rect y="2" width="16" height="1" fill="#e8544f"/><rect y="4" width="16" height="1" fill="#e8544f"/><rect y="6" width="16" height="1" fill="#e8544f"/><rect y="8" width="16" height="1" fill="#e8544f"/><rect y="10" width="16" height="1" fill="#e8544f"/><rect width="9" height="6.3" fill="#3f63d8"/><path d="M1 1.5H8M1 3.2H8M1 4.9H8" stroke="#9db4f5" stroke-width=".7" stroke-dasharray=".8 .9"/><rect width="16" height="11" fill="none" stroke="#d88" stroke-width=".5" opacity=".6"/></svg>
<span class="t" style="left:2090.00px;top:846.97px;font-size:20px;line-height:24.00px;color:#4c4c4c;transform:scaleX(1.0030);transform-origin:0 50%">9.11.68.71</span>
<span class="t" style="left:2342.00px;top:847.47px;font-size:20px;line-height:24.00px;color:#4c4c4c">0</span>
<svg class="a" style="left:2445px;top:850.4px" width="26.4" height="18.2" viewBox="0 0 16 11"><rect width="16" height="11" fill="#f6dcdc"/><rect y="0" width="16" height="1" fill="#e8544f"/><rect y="2" width="16" height="1" fill="#e8544f"/><rect y="4" width="16" height="1" fill="#e8544f"/><rect y="6" width="16" height="1" fill="#e8544f"/><rect y="8" width="16" height="1" fill="#e8544f"/><rect y="10" width="16" height="1" fill="#e8544f"/><rect width="9" height="6.3" fill="#3f63d8"/><path d="M1 1.5H8M1 3.2H8M1 4.9H8" stroke="#9db4f5" stroke-width=".7" stroke-dasharray=".8 .9"/><rect width="16" height="11" fill="none" stroke="#d88" stroke-width=".5" opacity=".6"/></svg>
<span class="t" style="left:2475.10px;top:846.97px;font-size:20px;line-height:24.00px;color:#4c4c4c;transform:scaleX(1.0236);transform-origin:0 50%">9.11.68.243</span>
<span class="t" style="left:2712.80px;top:847.47px;font-size:20px;line-height:24.00px;color:#4c4c4c">0</span>
<div class="a" style="left:18.5px;top:876.70px;width:2740px;height:33.50px;background:#ffffff;box-shadow:inset 0 -1px 0 #dcdcdc"></div>
<svg class="a" style="left:28.2px;top:878.9px" width="20.4" height="24.4" viewBox="0 0 20.4 24.4">
<path d="M.6 .6H13.2L19.8 7.2V23.8H.6Z" fill="#a3a3a3"/>
<path d="M13.2 .6L19.8 7.2H13.2Z" fill="#c9c9c9"/>
<path d="M3 3.8H12.4V8H18V21.8H3Z" fill="#f3f3f3"/>
<circle cx="11" cy="14.8" r="4.9" fill="#f21d28"/><circle cx="11.1" cy="14.2" r="1.3" fill="#ff9060"/></svg>
<span class="t" style="left:95.58px;top:881.17px;font-size:20px;line-height:24.00px;color:#4c4c4c;transform:scaleX(1.0204);transform-origin:0 50%">Potential Threat</span>
<span class="t" style="left:810.08px;top:881.17px;font-size:20px;line-height:24.00px;color:#4c4c4c;transform:scaleX(1.0176);transform-origin:0 50%">DefenderEventsCustom @ 9.11.68.243</span>
<span class="t" style="left:1381.00px;top:881.17px;font-size:20px;line-height:24.00px;color:#4c4c4c">1</span>
<span class="t" style="left:1406.90px;top:881.17px;font-size:20px;line-height:24.00px;color:#4c4c4c;transform:scaleX(1.0218);transform-origin:0 50%">Apr 12, 2024, 12:26:20 PM</span>
<span class="t" style="left:1668.99px;top:881.17px;font-size:20px;line-height:24.00px;color:#4c4c4c;transform:scaleX(1.0111);transform-origin:0 50%">Potential Infrastructure Exploit</span>
<svg class="a" style="left:2058.4px;top:884.1px" width="26.4" height="18.2" viewBox="0 0 16 11"><rect width="16" height="11" fill="#f6dcdc"/><rect y="0" width="16" height="1" fill="#e8544f"/><rect y="2" width="16" height="1" fill="#e8544f"/><rect y="4" width="16" height="1" fill="#e8544f"/><rect y="6" width="16" height="1" fill="#e8544f"/><rect y="8" width="16" height="1" fill="#e8544f"/><rect y="10" width="16" height="1" fill="#e8544f"/><rect width="9" height="6.3" fill="#3f63d8"/><path d="M1 1.5H8M1 3.2H8M1 4.9H8" stroke="#9db4f5" stroke-width=".7" stroke-dasharray=".8 .9"/><rect width="16" height="11" fill="none" stroke="#d88" stroke-width=".5" opacity=".6"/></svg>
<span class="t" style="left:2090.00px;top:880.67px;font-size:20px;line-height:24.00px;color:#4c4c4c;transform:scaleX(1.0030);transform-origin:0 50%">9.11.68.71</span>
<span class="t" style="left:2342.00px;top:881.17px;font-size:20px;line-height:24.00px;color:#4c4c4c">0</span>
<svg class="a" style="left:2445px;top:884.1px" width="26.4" height="18.2" viewBox="0 0 16 11"><rect width="16" height="11" fill="#f6dcdc"/><rect y="0" width="16" height="1" fill="#e8544f"/><rect y="2" width="16" height="1" fill="#e8544f"/><rect y="4" width="16" height="1" fill="#e8544f"/><rect y="6" width="16" height="1" fill="#e8544f"/><rect y="8" width="16" height="1" fill="#e8544f"/><rect y="10" width="16" height="1" fill="#e8544f"/><rect width="9" height="6.3" fill="#3f63d8"/><path d="M1 1.5H8M1 3.2H8M1 4.9H8" stroke="#9db4f5" stroke-width=".7" stroke-dasharray=".8 .9"/><rect width="16" height="11" fill="none" stroke="#d88" stroke-width=".5" opacity=".6"/></svg>
<span class="t" style="left:2475.10px;top:880.67px;font-size:20px;line-height:24.00px;color:#4c4c4c;transform:scaleX(1.0236);transform-origin:0 50%">9.11.68.243</span>
<span class="t" style="left:2712.80px;top:881.17px;font-size:20px;line-height:24.00px;color:#4c4c4c">0</span>
<div class="a" style="left:18.5px;top:910.20px;width:2740px;height:34.30px;background:#f7f7f7;box-shadow:inset 0 -1px 0 #dcdcdc"></div>
<svg class="a" style="left:28.2px;top:913.0px" width="20.4" height="24.4" viewBox="0 0 20.4 24.4">
<path d="M.6 .6H13.2L19.8 7.2V23.8H.6Z" fill="#a3a3a3"/>
<path d="M13.2 .6L19.8 7.2H13.2Z" fill="#c9c9c9"/>
<path d="M3 3.8H12.4V8H18V21.8H3Z" fill="#f3f3f3"/>
<circle cx="11" cy="14.8" r="4.9" fill="#f21d28"/><circle cx="11.1" cy="14.2" r="1.3" fill="#ff9060"/></svg>
<span class="t" style="left:95.58px;top:915.27px;font-size:20px;line-height:24.00px;color:#4c4c4c;transform:scaleX(1.0204);transform-origin:0 50%">Potential Threat</span>
<span class="t" style="left:810.08px;top:915.27px;font-size:20px;line-height:24.00px;color:#4c4c4c;transform:scaleX(1.0176);transform-origin:0 50%">DefenderEventsCustom @ 9.11.68.243</span>
<span class="t" style="left:1381.00px;top:915.27px;font-size:20px;line-height:24.00px;color:#4c4c4c">1</span>
<span class="t" style="left:1406.90px;top:915.27px;font-size:20px;line-height:24.00px;color:#4c4c4c;transform:scaleX(1.0218);transform-origin:0 50%">Apr 12, 2024, 12:26:16 PM</span>
<span class="t" style="left:1668.99px;top:915.27px;font-size:20px;line-height:24.00px;color:#4c4c4c;transform:scaleX(1.0111);transform-origin:0 50%">Potential Infrastructure Exploit</span>
<svg class="a" style="left:2058.4px;top:918.2px" width="26.4" height="18.2" viewBox="0 0 16 11"><rect width="16" height="11" fill="#f6dcdc"/><rect y="0" width="16" height="1" fill="#e8544f"/><rect y="2" width="16" height="1" fill="#e8544f"/><rect y="4" width="16" height="1" fill="#e8544f"/><rect y="6" width="16" height="1" fill="#e8544f"/><rect y="8" width="16" height="1" fill="#e8544f"/><rect y="10" width="16" height="1" fill="#e8544f"/><rect width="9" height="6.3" fill="#3f63d8"/><path d="M1 1.5H8M1 3.2H8M1 4.9H8" stroke="#9db4f5" stroke-width=".7" stroke-dasharray=".8 .9"/><rect width="16" height="11" fill="none" stroke="#d88" stroke-width=".5" opacity=".6"/></svg>
<span class="t" style="left:2090.00px;top:914.77px;font-size:20px;line-height:24.00px;color:#4c4c4c;transform:scaleX(1.0245);transform-origin:0 50%">9.11.68.255</span>
<span class="t" style="left:2342.00px;top:915.27px;font-size:20px;line-height:24.00px;color:#4c4c4c">0</span>
<svg class="a" style="left:2445px;top:918.2px" width="26.4" height="18.2" viewBox="0 0 16 11"><rect width="16" height="11" fill="#f6dcdc"/><rect y="0" width="16" height="1" fill="#e8544f"/><rect y="2" width="16" height="1" fill="#e8544f"/><rect y="4" width="16" height="1" fill="#e8544f"/><rect y="6" width="16" height="1" fill="#e8544f"/><rect y="8" width="16" height="1" fill="#e8544f"/><rect y="10" width="16" height="1" fill="#e8544f"/><rect width="9" height="6.3" fill="#3f63d8"/><path d="M1 1.5H8M1 3.2H8M1 4.9H8" stroke="#9db4f5" stroke-width=".7" stroke-dasharray=".8 .9"/><rect width="16" height="11" fill="none" stroke="#d88" stroke-width=".5" opacity=".6"/></svg>
<span class="t" style="left:2475.10px;top:914.77px;font-size:20px;line-height:24.00px;color:#4c4c4c;transform:scaleX(1.0236);transform-origin:0 50%">9.11.68.243</span>
<span class="t" style="left:2712.80px;top:915.27px;font-size:20px;line-height:24.00px;color:#4c4c4c">0</span>
<div class="a" style="left:18.5px;top:944.50px;width:2740px;height:33.90px;background:#ffffff;box-shadow:inset 0 -1px 0 #dcdcdc"></div>
<svg class="a" style="left:28.2px;top:946.1999999999999px" width="20.4" height="24.4" viewBox="0 0 20.4 24.4">
<path d="M.6 .6H13.2L19.8 7.2V23.8H.6Z" fill="#a3a3a3"/>
<path d="M13.2 .6L19.8 7.2H13.2Z" fill="#c9c9c9"/>
<path d="M3 3.8H12.4V8H18V21.8H3Z" fill="#f3f3f3"/>
<circle cx="11" cy="14.8" r="4.9" fill="#f21d28"/><circle cx="11.1" cy="14.2" r="1.3" fill="#ff9060"/></svg>
<span class="t" style="left:95.58px;top:948.47px;font-size:20px;line-height:24.00px;color:#4c4c4c;transform:scaleX(1.0204);transform-origin:0 50%">Potential Threat</span>
<span class="t" style="left:810.08px;top:948.47px;font-size:20px;line-height:24.00px;color:#4c4c4c;transform:scaleX(1.0176);transform-origin:0 50%">DefenderEventsCustom @ 9.11.68.243</span>
<span class="t" style="left:1381.00px;top:948.47px;font-size:20px;line-height:24.00px;color:#4c4c4c">1</span>
<span class="t" style="left:1406.90px;top:948.47px;font-size:20px;line-height:24.00px;color:#4c4c4c;transform:scaleX(1.0218);transform-origin:0 50%">Apr 12, 2024, 12:26:16 PM</span>
<span class="t" style="left:1668.99px;top:948.47px;font-size:20px;line-height:24.00px;color:#4c4c4c;transform:scaleX(1.0111);transform-origin:0 50%">Potential Infrastructure Exploit</span>
<svg class="a" style="left:2058.4px;top:951.4px" width="26.4" height="18.2" viewBox="0 0 16 11"><rect width="16" height="11" fill="#f6dcdc"/><rect y="0" width="16" height="1" fill="#e8544f"/><rect y="2" width="16" height="1" fill="#e8544f"/><rect y="4" width="16" height="1" fill="#e8544f"/><rect y="6" width="16" height="1" fill="#e8544f"/><rect y="8" width="16" height="1" fill="#e8544f"/><rect y="10" width="16" height="1" fill="#e8544f"/><rect width="9" height="6.3" fill="#3f63d8"/><path d="M1 1.5H8M1 3.2H8M1 4.9H8" stroke="#9db4f5" stroke-width=".7" stroke-dasharray=".8 .9"/><rect width="16" height="11" fill="none" stroke="#d88" stroke-width=".5" opacity=".6"/></svg>
<span class="t" style="left:2090.00px;top:947.97px;font-size:20px;line-height:24.00px;color:#4c4c4c;transform:scaleX(1.0245);transform-origin:0 50%">9.11.68.255</span>
<span class="t" style="left:2342.00px;top:948.47px;font-size:20px;line-height:24.00px;color:#4c4c4c">0</span>
<svg class="a" style="left:2445px;top:951.4px" width="26.4" height="18.2" viewBox="0 0 16 11"><rect width="16" height="11" fill="#f6dcdc"/><rect y="0" width="16" height="1" fill="#e8544f"/><rect y="2" width="16" height="1" fill="#e8544f"/><rect y="4" width="16" height="1" fill="#e8544f"/><rect y="6" width="16" height="1" fill="#e8544f"/><rect y="8" width="16" height="1" fill="#e8544f"/><rect y="10" width="16" height="1" fill="#e8544f"/><rect width="9" height="6.3" fill="#3f63d8"/><path d="M1 1.5H8M1 3.2H8M1 4.9H8" stroke="#9db4f5" stroke-width=".7" stroke-dasharray=".8 .9"/><rect width="16" height="11" fill="none" stroke="#d88" stroke-width=".5" opacity=".6"/></svg>
<span class="t" style="left:2475.10px;top:947.97px;font-size:20px;line-height:24.00px;color:#4c4c4c;transform:scaleX(1.0236);transform-origin:0 50%">9.11.68.243</span>
<span class="t" style="left:2712.80px;top:948.47px;font-size:20px;line-height:24.00px;color:#4c4c4c">0</span>
<div class="a" style="left:18.5px;top:978.40px;width:2740px;height:33.40px;background:#f7f7f7;box-shadow:inset 0 -1px 0 #dcdcdc"></div>
<svg class="a" style="left:28.2px;top:980.9px" width="20.4" height="24.4" viewBox="0 0 20.4 24.4">
<path d="M.6 .6H13.2L19.8 7.2V23.8H.6Z" fill="#a3a3a3"/>
<path d="M13.2 .6L19.8 7.2H13.2Z" fill="#c9c9c9"/>
<path d="M3 3.8H12.4V8H18V21.8H3Z" fill="#f3f3f3"/>
<circle cx="11" cy="14.8" r="4.9" fill="#f21d28"/><circle cx="11.1" cy="14.2" r="1.3" fill="#ff9060"/></svg>
<span class="t" style="left:95.58px;top:983.17px;font-size:20px;line-height:24.00px;color:#4c4c4c;transform:scaleX(1.0204);transform-origin:0 50%">Potential Threat</span>
<span class="t" style="left:810.08px;top:983.17px;font-size:20px;line-height:24.00px;color:#4c4c4c;transform:scaleX(1.0176);transform-origin:0 50%">DefenderEventsCustom @ 9.11.68.243</span>
<span class="t" style="left:1381.00px;top:983.17px;font-size:20px;line-height:24.00px;color:#4c4c4c">1</span>
<span class="t" style="left:1406.90px;top:983.17px;font-size:20px;line-height:24.00px;color:#4c4c4c;transform:scaleX(1.0218);transform-origin:0 50%">Apr 12, 2024, 12:19:28 PM</span>
<span class="t" style="left:1668.99px;top:983.17px;font-size:20px;line-height:24.00px;color:#4c4c4c;transform:scaleX(1.0111);transform-origin:0 50%">Potential Infrastructure Exploit</span>
<svg class="a" style="left:2058.4px;top:986.1px" width="26.4" height="18.2" viewBox="0 0 16 11"><rect width="16" height="11" fill="#f6dcdc"/><rect y="0" width="16" height="1" fill="#e8544f"/><rect y="2" width="16" height="1" fill="#e8544f"/><rect y="4" width="16" height="1" fill="#e8544f"/><rect y="6" width="16" height="1" fill="#e8544f"/><rect y="8" width="16" height="1" fill="#e8544f"/><rect y="10" width="16" height="1" fill="#e8544f"/><rect width="9" height="6.3" fill="#3f63d8"/><path d="M1 1.5H8M1 3.2H8M1 4.9H8" stroke="#9db4f5" stroke-width=".7" stroke-dasharray=".8 .9"/><rect width="16" height="11" fill="none" stroke="#d88" stroke-width=".5" opacity=".6"/></svg>
<span class="t" style="left:2090.00px;top:982.67px;font-size:20px;line-height:24.00px;color:#4c4c4c;transform:scaleX(1.0245);transform-origin:0 50%">9.11.68.222</span>
<span class="t" style="left:2342.00px;top:983.17px;font-size:20px;line-height:24.00px;color:#4c4c4c">0</span>
<svg class="a" style="left:2445px;top:986.1px" width="26.4" height="18.2" viewBox="0 0 16 11"><rect width="16" height="11" fill="#f6dcdc"/><rect y="0" width="16" height="1" fill="#e8544f"/><rect y="2" width="16" height="1" fill="#e8544f"/><rect y="4" width="16" height="1" fill="#e8544f"/><rect y="6" width="16" height="1" fill="#e8544f"/><rect y="8" width="16" height="1" fill="#e8544f"/><rect y="10" width="16" height="1" fill="#e8544f"/><rect width="9" height="6.3" fill="#3f63d8"/><path d="M1 1.5H8M1 3.2H8M1 4.9H8" stroke="#9db4f5" stroke-width=".7" stroke-dasharray=".8 .9"/><rect width="16" height="11" fill="none" stroke="#d88" stroke-width=".5" opacity=".6"/></svg>
<span class="t" style="left:2475.10px;top:982.67px;font-size:20px;line-height:24.00px;color:#4c4c4c;transform:scaleX(1.0236);transform-origin:0 50%">9.11.68.243</span>
<span class="t" style="left:2712.80px;top:983.17px;font-size:20px;line-height:24.00px;color:#4c4c4c">0</span>
<div class="a" style="left:18.5px;top:1011.80px;width:2740px;height:34.10px;background:#ffffff;box-shadow:inset 0 -1px 0 #dcdcdc"></div>
<svg class="a" style="left:28.2px;top:1015.2px" width="20.4" height="24.4" viewBox="0 0 20.4 24.4">
<path d="M.6 .6H13.2L19.8 7.2V23.8H.6Z" fill="#a3a3a3"/>
<path d="M13.2 .6L19.8 7.2H13.2Z" fill="#c9c9c9"/>
<path d="M3 3.8H12.4V8H18V21.8H3Z" fill="#f3f3f3"/>
<circle cx="11" cy="14.8" r="4.9" fill="#f21d28"/><circle cx="11.1" cy="14.2" r="1.3" fill="#ff9060"/></svg>
<span class="t" style="left:95.58px;top:1017.47px;font-size:20px;line-height:24.00px;color:#4c4c4c;transform:scaleX(1.0204);transform-origin:0 50%">Potential Threat</span>
<span class="t" style="left:810.08px;top:1017.47px;font-size:20px;line-height:24.00px;color:#4c4c4c;transform:scaleX(1.0176);transform-origin:0 50%">DefenderEventsCustom @ 9.11.68.243</span>
<span class="t" style="left:1381.00px;top:1017.47px;font-size:20px;line-height:24.00px;color:#4c4c4c">1</span>
<span class="t" style="left:1406.90px;top:1017.47px;font-size:20px;line-height:24.00px;color:#4c4c4c;transform:scaleX(1.0218);transform-origin:0 50%">Apr 12, 2024, 12:19:19 PM</span>
<span class="t" style="left:1668.99px;top:1017.47px;font-size:20px;line-height:24.00px;color:#4c4c4c;transform:scaleX(1.0111);transform-origin:0 50%">Potential Infrastructure Exploit</span>
<svg class="a" style="left:2058.4px;top:1020.4000000000001px" width="26.4" height="18.2" viewBox="0 0 16 11"><rect width="16" height="11" fill="#f6dcdc"/><rect y="0" width="16" height="1" fill="#e8544f"/><rect y="2" width="16" height="1" fill="#e8544f"/><rect y="4" width="16" height="1" fill="#e8544f"/><rect y="6" width="16" height="1" fill="#e8544f"/><rect y="8" width="16" height="1" fill="#e8544f"/><rect y="10" width="16" height="1" fill="#e8544f"/><rect width="9" height="6.3" fill="#3f63d8"/><path d="M1 1.5H8M1 3.2H8M1 4.9H8" stroke="#9db4f5" stroke-width=".7" stroke-dasharray=".8 .9"/><rect width="16" height="11" fill="none" stroke="#d88" stroke-width=".5" opacity=".6"/></svg>
<span class="t" style="left:2090.00px;top:1016.97px;font-size:20px;line-height:24.00px;color:#4c4c4c;transform:scaleX(1.0030);transform-origin:0 50%">9.11.68.71</span>
<span class="t" style="left:2342.00px;top:1017.47px;font-size:20px;line-height:24.00px;color:#4c4c4c">0</span>
<svg class="a" style="left:2445px;top:1020.4000000000001px" width="26.4" height="18.2" viewBox="0 0 16 11"><rect width="16" height="11" fill="#f6dcdc"/><rect y="0" width="16" height="1" fill="#e8544f"/><rect y="2" width="16" height="1" fill="#e8544f"/><rect y="4" width="16" height="1" fill="#e8544f"/><rect y="6" width="16" height="1" fill="#e8544f"/><rect y="8" width="16" height="1" fill="#e8544f"/><rect y="10" width="16" height="1" fill="#e8544f"/><rect width="9" height="6.3" fill="#3f63d8"/><path d="M1 1.5H8M1 3.2H8M1 4.9H8" stroke="#9db4f5" stroke-width=".7" stroke-dasharray=".8 .9"/><rect width="16" height="11" fill="none" stroke="#d88" stroke-width=".5" opacity=".6"/></svg>
<span class="t" style="left:2475.10px;top:1016.97px;font-size:20px;line-height:24.00px;color:#4c4c4c;transform:scaleX(1.0236);transform-origin:0 50%">9.11.68.243</span>
<span class="t" style="left:2712.80px;top:1017.47px;font-size:20px;line-height:24.00px;color:#4c4c4c">0</span>
<div class="a" style="left:85.5px;top:620.5px;width:1px;height:425.4px;background:#cfcfcf"></div>
<div class="a" style="left:800.2px;top:620.5px;width:1px;height:425.4px;background:#cfcfcf"></div>
<div class="a" style="left:1317.2px;top:620.5px;width:1px;height:425.4px;background:#cfcfcf"></div>
<div class="a" style="left:1397.9px;top:620.5px;width:1px;height:425.4px;background:#cfcfcf"></div>
<div class="a" style="left:1659.9px;top:620.5px;width:1px;height:425.4px;background:#cfcfcf"></div>
<div class="a" style="left:2048.3px;top:620.5px;width:1px;height:425.4px;background:#cfcfcf"></div>
<div class="a" style="left:2331.7px;top:620.5px;width:1px;height:425.4px;background:#cfcfcf"></div>
<div class="a" style="left:2435.1px;top:620.5px;width:1px;height:425.4px;background:#cfcfcf"></div>
<div class="a" style="left:2703.0px;top:620.5px;width:1px;height:425.4px;background:#cfcfcf"></div>
<div class="a" style="left:18.0px;top:620.5px;width:1px;height:425.4px;background:#d2d2d2"></div>
<div class="a" style="left:18.5px;top:1045.4px;width:2740px;height:1px;background:#d2d2d2"></div>
<span class="t" style="left:383.02px;top:635.49px;font-size:18.5px;line-height:22.20px;color:#151515;font-weight:bold;letter-spacing:0.598px;transform:scaleX(1.0800);transform-origin:0 50%;-webkit-text-stroke:.3px #151515">Event Name</span>
<span class="t" style="left:1001.82px;top:635.49px;font-size:18.5px;line-height:22.20px;color:#151515;font-weight:bold;letter-spacing:0.483px;transform:scaleX(1.0800);transform-origin:0 50%;-webkit-text-stroke:.3px #151515">Log Source</span>
<span class="t" style="left:1328.42px;top:623.79px;font-size:18.5px;line-height:22.20px;color:#151515;font-weight:bold;letter-spacing:1.122px;transform:scaleX(1.0800);transform-origin:0 50%;-webkit-text-stroke:.3px #151515">Event</span>
<span class="t" style="left:1328.35px;top:647.99px;font-size:18.5px;line-height:22.20px;color:#151515;font-weight:bold;letter-spacing:0.411px;transform:scaleX(1.0800);transform-origin:0 50%;-webkit-text-stroke:.3px #151515">Count</span>
<span class="t" style="left:1497.30px;top:635.49px;font-size:18.5px;line-height:22.20px;color:#151515;font-weight:bold;transform:scaleX(1.0339);transform-origin:0 50%">Time</span>
<svg class="a" style="left:1548.2px;top:640.7px" width="17" height="10" viewBox="0 0 17 10"><path d="M0 0H17L8.5 10Z" fill="#0b3a3a"/></svg>
<span class="t" style="left:1754.97px;top:635.49px;font-size:18.5px;line-height:22.20px;color:#151515;font-weight:bold;letter-spacing:0.450px;transform:scaleX(1.0800);transform-origin:0 50%;-webkit-text-stroke:.3px #151515">Low Level Category</span>
<span class="t" style="left:2144.40px;top:635.49px;font-size:18.5px;line-height:22.20px;color:#151515;font-weight:bold;letter-spacing:0.162px;transform:scaleX(1.0800);transform-origin:0 50%;-webkit-text-stroke:.3px #151515">Source IP</span>
<span class="t" style="left:2349.45px;top:623.79px;font-size:18.5px;line-height:22.20px;color:#151515;font-weight:bold;letter-spacing:0.236px;transform:scaleX(1.0800);transform-origin:0 50%;-webkit-text-stroke:.3px #151515">Source</span>
<span class="t" style="left:2362.32px;top:647.99px;font-size:18.5px;line-height:22.20px;color:#151515;font-weight:bold;letter-spacing:0.646px;transform:scaleX(1.0800);transform-origin:0 50%;-webkit-text-stroke:.3px #151515">Port</span>
<span class="t" style="left:2499.02px;top:635.49px;font-size:18.5px;line-height:22.20px;color:#151515;font-weight:bold;letter-spacing:0.401px;transform:scaleX(1.0800);transform-origin:0 50%;-webkit-text-stroke:.3px #151515">Destination IP</span>
<span class="t" style="left:2713.02px;top:623.79px;font-size:18.5px;line-height:22.20px;color:#151515;font-weight:bold;letter-spacing:1.076px;transform:scaleX(1.0800);transform-origin:0 50%">Destination</span>
<span class="t" style="left:2733.72px;top:647.99px;font-size:18.5px;line-height:22.20px;color:#151515;font-weight:bold;letter-spacing:0.646px;transform:scaleX(1.0800);transform-origin:0 50%">Port</span>
<div class="a" style="left:27px;top:1061.8px;width:2289px;height:3px;background:#7a7a7a;border-radius:2px"></div>
<div class="a" style="left:5px;top:1071px;width:2737px;height:31px;background:#f3f3f3;border-top:1px solid #e9e9e9"></div>
<span class="t" style="left:26.33px;top:1095.32px;font-size:19px;line-height:22.80px;color:#333;transform:scaleX(1.0707);transform-origin:0 50%">Displaying 1 to 11 of 11 items (Elapsed time: 0:00:00.003)</span>
<div class="a" style="left:2741px;top:464px;width:1px;height:554px;background:#8c8c8c"></div>
</div></body></html>
